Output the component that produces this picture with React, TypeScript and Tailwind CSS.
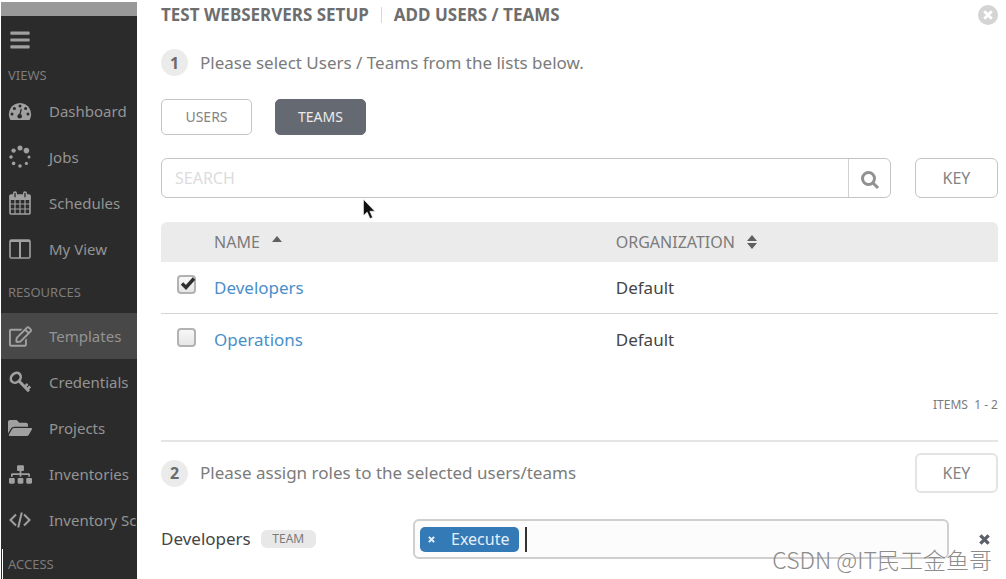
import { useState, type ReactNode } from 'react';
import { FaBars, FaFolderOpen, FaRegEdit, FaSitemap } from 'react-icons/fa';

function DashboardIcon() {
  return (
    <svg viewBox="0 0 24 18" className="h-[18px] w-6" fill="currentColor" aria-hidden="true">
      <path d="M12 1a11.3 11.3 0 0 0-9.6 17h19.2A11.3 11.3 0 0 0 12 1z" />
      <g fill="#2b2b2b">
        <circle cx="12" cy="4" r="1.5" />
        <circle cx="6.4" cy="6.4" r="1.5" />
        <circle cx="17.6" cy="6.4" r="1.5" />
        <circle cx="4" cy="12" r="1.5" />
        <circle cx="20" cy="12" r="1.5" />
        <circle cx="11.7" cy="14.2" r="2.3" />
        <path d="M12.6 6.8l1.3.3-1.5 6.6-1.3-.3z" />
      </g>
    </svg>
  );
}

function JobsIcon() {
  return (
    <svg viewBox="0 0 24 24" className="size-6" fill="currentColor" aria-hidden="true">
      <circle cx="12" cy="3" r="2.5" />
      <circle cx="18.4" cy="5.6" r="2.8" />
      <circle cx="5.6" cy="5.6" r="2.2" />
      <circle cx="3" cy="12" r="1.8" />
      <circle cx="21" cy="12" r="1.5" />
      <circle cx="5.6" cy="18.4" r="1.8" />
      <circle cx="18.4" cy="18.4" r="1.6" />
      <circle cx="12" cy="21" r="1.8" />
    </svg>
  );
}

function ScheduleIcon() {
  return (
    <svg viewBox="0 0 22 24" className="h-6 w-[22px]" fill="none" stroke="currentColor" aria-hidden="true">
      <rect x="1" y="4" width="20" height="19" rx="1" strokeWidth="1.6" />
      <path d="M1 4.5h20v4H1z" fill="currentColor" />
      <path d="M1 13h20M1 18h20M6 8v15M11 8v15M16 8v15" strokeWidth="1.2" />
      <path d="M6 2.2v4M16 2.2v4" strokeWidth="4" strokeLinecap="round" />
      <path d="M6 2.4v3.4M16 2.4v3.4" stroke="#2b2b2b" strokeWidth="1.3" strokeLinecap="round" />
    </svg>
  );
}

function ViewIcon() {
  return (
    <svg viewBox="0 0 22 20" className="h-5 w-[22px]" fill="none" stroke="currentColor" aria-hidden="true">
      <rect x="1" y="1" width="20" height="18" rx="1.5" strokeWidth="1.6" />
      <path d="M1 2h20M11 2v17" strokeWidth="2" />
    </svg>
  );
}

function KeyIcon() {
  return (
    <svg viewBox="0 0 22 22" className="size-[22px]" fill="none" stroke="currentColor" aria-hidden="true">
      <ellipse cx="6.8" cy="6.8" rx="5.4" ry="4.4" strokeWidth="2.6" transform="rotate(-45 6.8 6.8)" />
      <path d="M9.5 9.5L20 20.3" strokeWidth="3" />
      <path d="M15.5 16l3.2-3M18 18.5l3.2-3" strokeWidth="2.4" />
    </svg>
  );
}

function ScriptIcon() {
  return (
    <svg viewBox="0 0 24 18" className="h-[18px] w-6" fill="none" stroke="currentColor" strokeWidth="2" aria-hidden="true">
      <path d="M8 3.5L2.5 9 8 14.5M16 3.5L21.5 9 16 14.5M13.8 1.5l-3.6 15" />
    </svg>
  );
}

function Cross({ className }: { className: string }) {
  return (
    <svg viewBox="0 0 12 12" className={className} fill="none" stroke="currentColor" strokeWidth="3.6" aria-hidden="true">
      <path d="M1.5 1.5l9 9M10.5 1.5l-9 9" />
    </svg>
  );
}

type NavEntry = { label: string; icon: ReactNode; active?: boolean };

const views: NavEntry[] = [
  { label: 'Dashboard', icon: <DashboardIcon /> },
  { label: 'Jobs', icon: <JobsIcon /> },
  { label: 'Schedules', icon: <ScheduleIcon /> },
  { label: 'My View', icon: <ViewIcon /> },
];

const resources: NavEntry[] = [
  { label: 'Templates', icon: <FaRegEdit size={23} />, active: true },
  { label: 'Credentials', icon: <KeyIcon /> },
  { label: 'Projects', icon: <FaFolderOpen size={24} /> },
  { label: 'Inventories', icon: <FaSitemap size={23} /> },
  { label: 'Inventory Scripts', icon: <ScriptIcon /> },
];

const teams = [
  { name: 'Developers', organization: 'Default' },
  { name: 'Operations', organization: 'Default' },
];

function NavList({ items }: { items: NavEntry[] }) {
  return (
    <ul>
      {items.map((item) => (
        <li key={item.label}>
          <a
            href="#"
            className={`flex h-[46px] items-center gap-[17px] pl-[7px] text-[15px] whitespace-nowrap ${
              item.active ? 'bg-[#484848]' : ''
            }`}
          >
            <span className="flex w-6 shrink-0 justify-center text-[#a0a0a0]">{item.icon}</span>
            {item.label}
          </a>
        </li>
      ))}
    </ul>
  );
}

function Sidebar() {
  return (
    <aside className="ml-px w-[136px] shrink-0 overflow-hidden bg-[#2b2b2b] text-[#949494]">
      <div className="h-3.5 bg-[#999]" />
      <button type="button" aria-label="Toggle menu" className="flex h-12 items-center pl-2 text-[#a0a0a0]">
        <FaBars size={22} />
      </button>
      <h2 className="flex h-6 items-center pl-[7px] text-[13px] text-[#7c7c7c]">VIEWS</h2>
      <NavList items={views} />
      <h2 className="flex h-[41px] items-center pl-[7px] text-[13px] text-[#7c7c7c]">RESOURCES</h2>
      <NavList items={resources} />
      <h2 className="mt-1.5 ml-px flex h-8 items-center border-l border-white pl-[5px] text-[13px] text-[#7c7c7c]">
        ACCESS
      </h2>
    </aside>
  );
}

function Step({ number, children }: { number: number; children: ReactNode }) {
  return (
    <div className="flex items-center gap-3 text-[17px] text-[#7b7b7b]">
      <span className="flex size-[27px] items-center justify-center rounded-full bg-[#ebebeb] text-base font-bold text-[#6a6a6a]">
        {number}
      </span>
      <p>{children}</p>
    </div>
  );
}

function KeyButton({ muted = false }: { muted?: boolean }) {
  return (
    <button
      type="button"
      className={`h-10 w-[83px] shrink-0 rounded-md text-base text-[#848484] ${
        muted ? 'border-2 border-[#e4e4e4]' : 'border border-[#c4c4c4]'
      }`}
    >
      KEY
    </button>
  );
}

function TeamsTable() {
  const [selected, setSelected] = useState<string[]>(['Developers']);

  const toggle = (name: string) =>
    setSelected((prev) => (prev.includes(name) ? prev.filter((n) => n !== name) : [...prev, name]));

  return (
    <table className="mt-6 w-full table-fixed border-separate border-spacing-0 text-left text-[17px] text-[#454545]">
      <thead>
        <tr className="h-10 text-base text-[#7b7b7b]">
          <th className="w-[53px] rounded-tl-md bg-[#ebebeb]" aria-label="Select" />
          <th className="w-[48%] bg-[#ebebeb] font-normal">
            <button type="button" className="flex items-center gap-3">
              NAME
              <svg viewBox="0 0 10 6" className="mb-1.5 h-1.5 w-2.5" fill="#606060" aria-hidden="true">
                <path d="M5 0l5 6H0z" />
              </svg>
            </button>
          </th>
          <th className="rounded-tr-md bg-[#ebebeb] font-normal">
            <button type="button" className="flex items-center gap-3">
              ORGANIZATION
              <svg viewBox="0 0 10 14" className="h-3.5 w-2.5" fill="#606060" aria-hidden="true">
                <path d="M5 0l5 6H0zM0 8h10l-5 6z" />
              </svg>
            </button>
          </th>
        </tr>
      </thead>
      <tbody>
        {teams.map((team, i) => {
          const border = i < teams.length - 1 ? 'border-b border-[#d4d4d4]' : '';
          return (
            <tr key={team.name} className="h-[52px]">
              <td className={`pl-4 ${border}`}>
                <span className="relative mb-1.5 block size-[19px]">
                  <input
                    type="checkbox"
                    aria-label={`Select ${team.name}`}
                    checked={selected.includes(team.name)}
                    onChange={() => toggle(team.name)}
                    className="peer block size-[19px] appearance-none rounded-[4px] border-2 border-[#b2b2b2] bg-linear-to-b from-[#f8f8f8] to-[#e6e6e6]"
                  />
                  <svg
                    viewBox="0 0 19 19"
                    className="pointer-events-none absolute inset-0 hidden size-[19px] peer-checked:block"
                    fill="none"
                    stroke="#2e2e2e"
                    strokeWidth="3.4"
                    aria-hidden="true"
                  >
                    <path d="M5 8.5l4 4 8-9" />
                  </svg>
                </span>
              </td>
              <td className={border}>
                <a href="#" className="text-[#4a8fca]">
                  {team.name}
                </a>
              </td>
              <td className={border}>{team.organization}</td>
            </tr>
          );
        })}
      </tbody>
    </table>
  );
}

function RoleRow() {
  return (
    <div className="mt-[26px] flex items-center text-[17px] text-[#454545]">
      <div className="flex w-[252px] shrink-0 items-center gap-2.5">
        <label htmlFor="roles">Developers</label>
        <span className="flex h-[18px] w-[55px] items-center justify-center rounded-md bg-[#e8e8e8] text-xs text-[#7b7b7b]">
          TEAM
        </span>
      </div>
      <div className="flex h-10 grow items-center gap-1 rounded-md border-2 border-[#d0cfcd] bg-[#fcfcfc] pl-[5px]">
        <span className="flex h-[25px] w-[99px] shrink-0 items-center gap-4 rounded-[5px] bg-[#337ab7] pl-2 text-base text-[#e6eff7]">
          <button type="button" aria-label="Remove Execute">
            <Cross className="size-[7px]" />
          </button>
          Execute
        </span>
        <span className="ml-0.5 h-[25px] w-0.5 bg-[#333]" />
        <input id="roles" type="text" className="h-full min-w-0 grow bg-transparent outline-none" />
      </div>
      <button type="button" aria-label="Remove Developers" className="flex w-[49px] shrink-0 justify-end pr-2 text-[#5c6069]">
        <Cross className="size-[11px]" />
      </button>
    </div>
  );
}

export default function App() {
  const [tab, setTab] = useState('TEAMS');

  return (
    <div className="relative flex h-screen overflow-hidden bg-white pt-0.5 font-['Noto_Sans',sans-serif]">
      <Sidebar />
      <main className="min-w-0 grow pr-2 pl-6">
        <header className="flex h-[25px] items-center justify-between text-[17px] font-bold text-[#6e6e6e]">
          <h1 className="flex items-center gap-3">
            TEST WEBSERVERS SETUP
            <span className="h-4 w-px bg-[#d8d8d8]" />
            ADD USERS / TEAMS
          </h1>
          <button type="button" aria-label="Close" className="flex size-5 items-center justify-center rounded-full bg-[#d4d4d4] text-white">
            <Cross className="size-2.5" />
          </button>
        </header>

        <div className="mt-[22px]">
          <Step number={1}>Please select Users / Teams from the lists below.</Step>
        </div>

        <div className="mt-[23px] flex gap-[23px]">
          {['USERS', 'TEAMS'].map((name) => (
            <button
              key={name}
              type="button"
              onClick={() => setTab(name)}
              className={`h-9 w-[91px] rounded-[5px] border text-sm ${
                tab === name
                  ? 'border-[#646972] bg-[#646972] text-[#ececec]'
                  : 'border-[#c4c4c4] bg-white text-[#848484]'
              }`}
            >
              {name}
            </button>
          ))}
        </div>

        <div className="mt-[23px] flex gap-6">
          <form className="flex h-10 grow rounded-md border border-[#c4c4c4]">
            <input
              type="search"
              aria-label="Search"
              placeholder="SEARCH"
              className="min-w-0 grow px-[13px] text-base outline-none placeholder:text-[#dcdcdc]"
            />
            <button type="button" aria-label="Search" className="flex w-[42px] items-center justify-center border-l border-[#d0d0d0]">
              <svg viewBox="0 0 20 20" className="mt-1 size-5" fill="none" stroke="#8f9193" strokeWidth="3" aria-hidden="true">
                <circle cx="8.5" cy="8.5" r="6" />
                <path d="M13 13l5 5" />
              </svg>
            </button>
          </form>
          <KeyButton />
        </div>

        <TeamsTable />

        <p className="mt-[29px] text-right text-xs leading-5 text-[#7b7b7b]">ITEMS&nbsp; 1 - 2</p>

        <section className="mt-[25px] border-t-2 border-[#e4e4e4] pt-[11px]">
          <div className="flex items-center justify-between">
            <Step number={2}>Please assign roles to the selected users/teams</Step>
            <KeyButton muted />
          </div>
          <RoleRow />
        </section>
      </main>

      <svg viewBox="0 0 14 21" className="pointer-events-none absolute top-[199px] left-[363px] h-[21px] w-3.5" aria-hidden="true">
        <path d="M.5.5v16l3.7-3.4 2.8 6.4 2.6-1.1-2.8-6.2h5z" fill="#111" stroke="#fff" strokeWidth=".5" />
      </svg>
      <p className="pointer-events-none absolute right-3.5 bottom-0 font-['Noto_Sans_CJK_SC',sans-serif] text-[23px] leading-10 font-light text-[#8c8c8c]">
        CSDN @IT民工金鱼哥
      </p>
    </div>
  );
}
